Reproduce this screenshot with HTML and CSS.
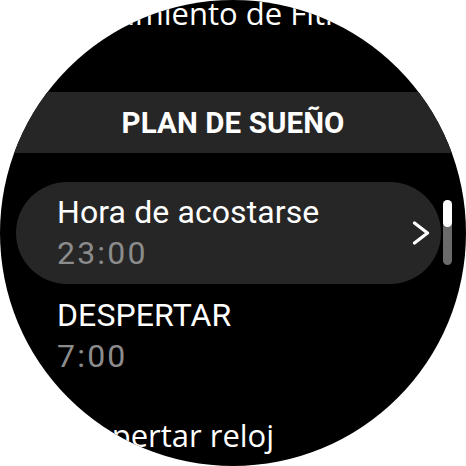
FILE: index.html
```html
<!DOCTYPE html>
<html lang="es">
<head>
<meta charset="utf-8">
<title>Plan de sueño</title>
<link rel="stylesheet" href="styles.css">
</head>
<body>
<div class="watch">
  <ul class="list">
    <li class="plain top">Seguimiento de Fitness</li>
    <li class="section">PLAN DE SUEÑO</li>
    <li class="item card">
      <div class="texts">
        <span class="title">Hora de acostarse</span>
        <span class="value">23:00</span>
      </div>
      <svg class="chevron" width="18" height="24" viewBox="0 0 18 24" aria-hidden="true">
        <path d="M2.5 2 L15.5 12 L2.5 22" fill="none" stroke="#fff" stroke-width="3.2" stroke-linecap="round" stroke-linejoin="round"/>
      </svg>
    </li>
    <li class="item">
      <div class="texts">
        <span class="title">DESPERTAR</span>
        <span class="value">7:00</span>
      </div>
    </li>
    <li class="plain bottom">Despertar reloj</li>
  </ul>
  <div class="scrollbar"><div class="thumb"></div></div>
</div>
</body>
</html>
```
FILE: styles.css
```css
html, body {
  margin: 0;
  padding: 0;
  background: #ffffff;
}

.watch {
  position: relative;
  width: 466px;
  height: 466px;
  border-radius: 50%;
  background: #000000;
  overflow: hidden;
  color: #ffffff;
  font-family: Roboto, "Liberation Sans", sans-serif;
}

.list {
  list-style: none;
  margin: -7px 0 0 0;
  padding: 0;
  display: flex;
  flex-direction: column;
}

.plain {
  font-family: "Open Sans", "Noto Sans", sans-serif;
  font-size: 31px;
  line-height: 40px;
  padding-left: 57px;
  white-space: nowrap;
}

.section {
  margin-top: 59px;
  height: 61px;
  background: #262626;
  display: flex;
  align-items: center;
  justify-content: center;
  font-weight: 700;
  font-size: 29.5px;
  letter-spacing: 0.1px;
}

.item {
  display: flex;
  align-items: center;
  padding: 11px 11px 11px 57px;
}

.card {
  margin: 29px 25px 0 16px;
  padding: 10px 11px 10px 41px;
  background: #262626;
  border-radius: 51px;
}

.texts {
  flex: 1;
  display: flex;
  flex-direction: column;
}

.title {
  font-size: 32px;
  line-height: 41px;
  letter-spacing: 0.1px;
}

.value {
  font-size: 32px;
  line-height: 41px;
  letter-spacing: 2.2px;
  color: #8c8c8c;
}

.chevron {
  display: block;
}

.bottom {
  margin-top: 27px;
}

.scrollbar {
  position: absolute;
  left: 443px;
  top: 200px;
  width: 9px;
  height: 65px;
  border-radius: 5px;
  background: #6b6b6b;
}

.thumb {
  height: 27px;
  border-radius: 5px;
  background: #ffffff;
}
```
